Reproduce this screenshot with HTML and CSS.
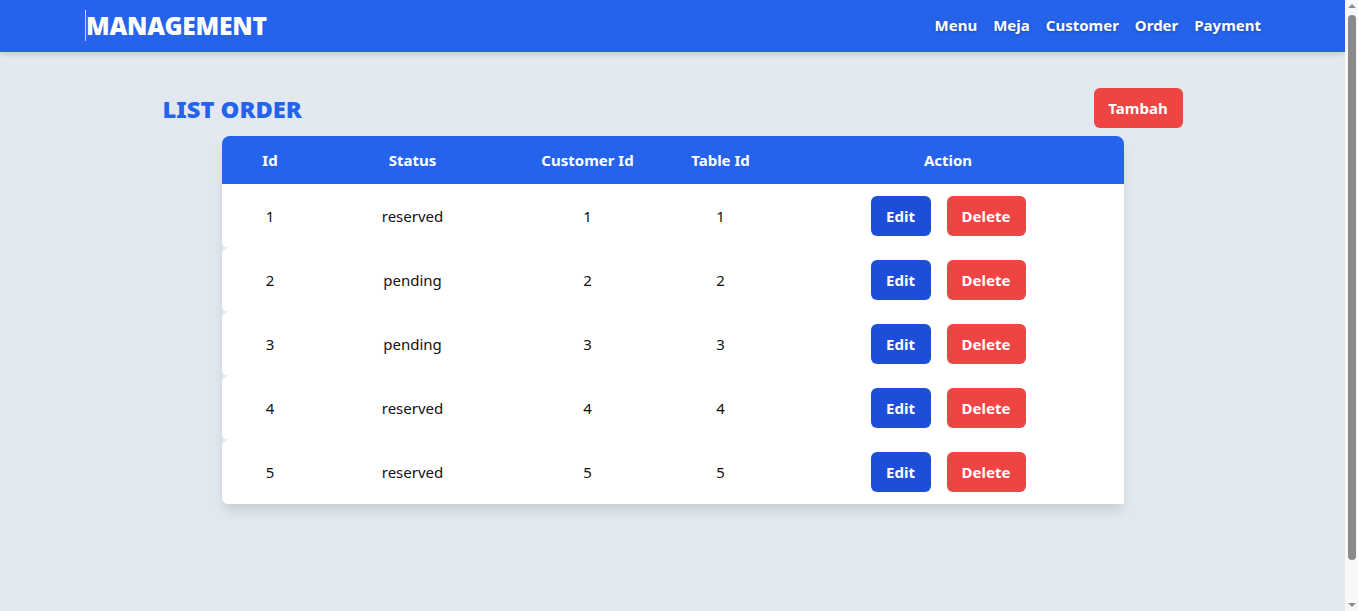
FILE: index.html
```html
<!DOCTYPE html>
<html lang="id">
<head>
<meta charset="utf-8">
<title>Management - List Order</title>
<link rel="stylesheet" href="styles.css">
</head>
<body>
<div class="page">
  <nav class="navbar">
    <div class="brand">MANAGEMENT</div>
    <ul class="nav-links">
      <li><a href="#">Menu</a></li>
      <li><a href="#">Meja</a></li>
      <li><a href="#">Customer</a></li>
      <li><a href="#">Order</a></li>
      <li><a href="#">Payment</a></li>
    </ul>
  </nav>
  <main class="content">
    <div class="title-row">
      <h1 class="title">LIST ORDER</h1>
      <button class="btn btn-red btn-add">Tambah</button>
    </div>
    <table class="orders">
      <colgroup>
        <col class="c-id"><col class="c-status"><col class="c-cust"><col class="c-table"><col class="c-action">
      </colgroup>
      <thead>
        <tr><th>Id</th><th>Status</th><th>Customer Id</th><th>Table Id</th><th>Action</th></tr>
      </thead>
      <tbody>
        <tr><td>1</td><td>reserved</td><td>1</td><td>1</td><td><div class="actions"><button class="btn btn-blue">Edit</button><button class="btn btn-red">Delete</button></div></td></tr>
        <tr><td>2</td><td>pending</td><td>2</td><td>2</td><td><div class="actions"><button class="btn btn-blue">Edit</button><button class="btn btn-red">Delete</button></div></td></tr>
        <tr><td>3</td><td>pending</td><td>3</td><td>3</td><td><div class="actions"><button class="btn btn-blue">Edit</button><button class="btn btn-red">Delete</button></div></td></tr>
        <tr><td>4</td><td>reserved</td><td>4</td><td>4</td><td><div class="actions"><button class="btn btn-blue">Edit</button><button class="btn btn-red">Delete</button></div></td></tr>
        <tr><td>5</td><td>reserved</td><td>5</td><td>5</td><td><div class="actions"><button class="btn btn-blue">Edit</button><button class="btn btn-red">Delete</button></div></td></tr>
      </tbody>
    </table>
  </main>
</div>
<div class="scrollbar" aria-hidden="true">
  <span class="arrow arrow-up"></span>
  <span class="thumb"></span>
  <span class="arrow arrow-down"></span>
</div>
</body>
</html>
```
FILE: styles.css
```css
* { box-sizing: border-box; }
html, body { margin: 0; padding: 0; }
body {
  background: #e2e8f0;
  font-family: "Noto Sans", "Open Sans", sans-serif;
  color: #111;
  height: 611px;
  overflow: hidden;
}
.page {
  margin-right: 13px;
}
.navbar {
  height: 52px;
  background: #2563eb;
  display: flex;
  align-items: center;
  justify-content: space-between;
  padding: 0 84px 2px 85px;
  box-shadow: 0 2px 6px rgba(0,0,0,0.15);
}
.brand {
  color: #fff;
  font-size: 24.5px;
  font-weight: 900;
  letter-spacing: -0.2px;
  border-left: 1px solid #cfd6e6;
  line-height: 31px;
}
.nav-links {
  list-style: none;
  margin: 0;
  padding: 0;
  display: flex;
  gap: 16px;
}
.nav-links a {
  color: #fff;
  text-decoration: none;
  font-weight: 700;
  font-size: 15px;
  text-shadow: 0 1px 3px rgba(0,0,0,0.25);
}
.content {
  width: 1020px;
  margin: 0 auto;
  padding: 36px 0 0;
}
.title-row {
  display: flex;
  justify-content: space-between;
  align-items: center;
  height: 40px;
  margin-bottom: 8px;
}
.title {
  margin: 2px 0 0;
  font-size: 23.7px;
  font-weight: 900;
  color: #2563eb;
}
.btn {
  border: none;
  border-radius: 6px;
  color: #fff;
  font-family: inherit;
  font-weight: 700;
  font-size: 15px;
  height: 40px;
  cursor: pointer;
}
.btn-red { background: #ef4444; }
.btn-blue { background: #1d4ed8; }
.btn-add { width: 89px; }
.orders {
  width: 902px;
  margin: 0 auto;
  border-collapse: separate;
  border-spacing: 0;
  table-layout: fixed;
  box-shadow: 0 8px 12px -2px rgba(0,0,0,0.12);
  border-radius: 8px 8px 0 8px;
}
.c-id { width: 97px; }
.c-status { width: 188px; }
.c-cust { width: 162px; }
.c-table { width: 104px; }
.c-action { width: 351px; }
.orders th {
  background: #2563eb;
  color: #fff;
  font-weight: 700;
  font-size: 15px;
  height: 48px;
  text-align: center;
}
.orders th:first-child { border-top-left-radius: 8px; }
.orders th:last-child { border-top-right-radius: 8px; }
.orders td {
  background: #fff;
  height: 64px;
  text-align: center;
  font-size: 15px;
}
.orders td:first-child { border-radius: 6px 0 0 6px; }
.orders tbody tr:first-child td:first-child { border-top-left-radius: 0; }
.actions {
  display: flex;
  justify-content: center;
  gap: 16px;
}
.actions .btn-blue { width: 60px; }
.actions .btn-red { width: 79px; }

/* browser scrollbar lookalike */
.scrollbar {
  position: fixed;
  top: 0;
  right: 0;
  width: 13px;
  height: 611px;
  background: #f8f8f8;
}
.thumb {
  position: absolute;
  top: 15px;
  left: 3px;
  width: 8px;
  height: 545px;
  background: #8a8a8a;
  border-radius: 4px;
}
.arrow {
  position: absolute;
  left: 3px;
  width: 0;
  height: 0;
  border-left: 4px solid transparent;
  border-right: 4px solid transparent;
}
.arrow-up { top: 4px; border-bottom: 4px solid #8a8a8a; }
.arrow-down { bottom: 4px; border-top: 4px solid #8a8a8a; }
```
